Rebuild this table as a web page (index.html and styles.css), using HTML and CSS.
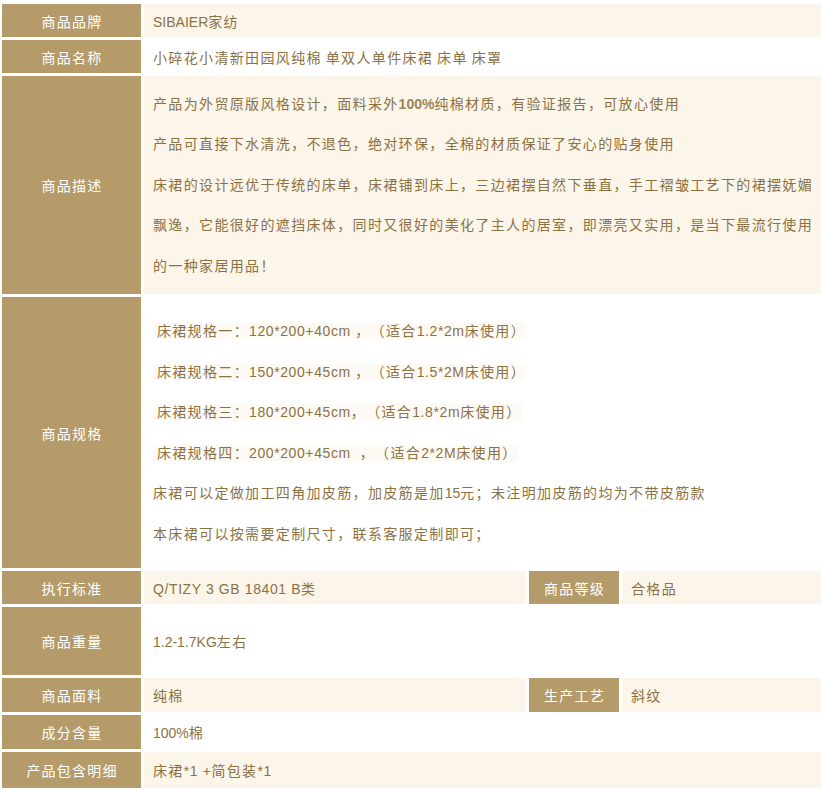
FILE: index.html
```html
<!DOCTYPE html>
<html lang="zh-CN">
<head>
<meta charset="utf-8">
<title>商品参数</title>
<link rel="stylesheet" href="styles.css">
</head>
<body>
<div class="spec">
  <div class="lb">商品品牌</div>
  <div class="val cream wide"><span class="in"><span class="en">SIBAIER</span>家纺</span></div>

  <div class="lb">商品名称</div>
  <div class="val white wide"><span class="in">小碎花小清新田园风纯棉<span class="en"> </span>单双人单件床裙<span class="en"> </span>床单<span class="en"> </span>床罩</span></div>

  <div class="lb">商品描述</div>
  <div class="val cream wide multi">
    <div class="txt">
      <p>产品为外贸原版风格设计，面料采外<b class="en">100%</b>纯棉材质，有验证报告，可放心使用</p>
      <p>产品可直接下水清洗，不退色，绝对环保，全棉的材质保证了安心的贴身使用</p>
      <p>床裙的设计远优于传统的床单，床裙铺到床上，三边裙摆自然下垂直，手工褶皱工艺下的裙摆妩媚飘逸，它能很好的遮挡床体，同时又很好的美化了主人的居室，即漂亮又实用，是当下最流行使用的一种家居用品！</p>
    </div>
  </div>

  <div class="lb">商品规格</div>
  <div class="val white wide multi">
    <div class="txt">
      <p><span class="hl"><span class="en">&nbsp;</span>床裙规格一：<span class="en sz">120*200+40cm </span>，（适合<span class="en sz">1.2*2m</span>床使用）</span></p>
      <p><span class="hl"><span class="en">&nbsp;</span>床裙规格二：<span class="en sz">150*200+45cm </span>，（适合<span class="en sz">1.5*2M</span>床使用）</span></p>
      <p><span class="hl"><span class="en">&nbsp;</span>床裙规格三：<span class="en sz">180*200+45cm</span>，（适合<span class="en sz">1.8*2m</span>床使用）</span></p>
      <p><span class="hl"><span class="en">&nbsp;</span>床裙规格四：<span class="en sz">200*200+45cm &nbsp;</span>，（适合<span class="en sz">2*2M</span>床使用）</span></p>
      <p>床裙可以定做加工四角加皮筋，加皮筋是加<span class="en">15</span>元；未注明加皮筋的均为不带皮筋款</p>
      <p>本床裙可以按需要定制尺寸，联系客服定制即可；</p>
    </div>
  </div>

  <div class="lb">执行标准</div>
  <div class="val cream"><span class="in"><span class="en sz">Q/TIZY 3 GB 18401 B</span>类</span></div>
  <div class="lb">商品等级</div>
  <div class="val cream"><span class="in">合格品</span></div>

  <div class="lb">商品重量</div>
  <div class="val white wide"><span class="in"><span class="en">1.2-1.7KG</span>左右</span></div>

  <div class="lb">商品面料</div>
  <div class="val cream"><span class="in">纯棉</span></div>
  <div class="lb">生产工艺</div>
  <div class="val cream"><span class="in">斜纹</span></div>

  <div class="lb">成分含量</div>
  <div class="val white wide"><span class="in"><span class="en">100%</span>棉</span></div>

  <div class="lb">产品包含明细</div>
  <div class="val cream wide"><span class="in">床裙<span class="en sz">*1 +</span>简包装<span class="en sz">*1</span></span></div>
</div>
</body>
</html>
```

FILE: styles.css
```css
html, body {
  margin: 0;
  padding: 0;
  background: #ffffff;
}

body {
  width: 821px;
  height: 790px;
  overflow: hidden;
  font-family: "Liberation Sans", "Noto Sans CJK SC", sans-serif;
  font-size: 14px;
  text-spacing-trim: space-all;
}

.spec {
  display: grid;
  grid-template-columns: 139px 382px 90px 199px;
  grid-template-rows: 33px 33px 218px 271px 33px 68px 34px 34px 36px;
  gap: 3px;
  padding: 4px 0 0 2px;
}

.lb {
  background: #b59b6a;
  color: #ffffff;
  letter-spacing: 1.2px;
  padding-left: 1px;
  display: flex;
  align-items: center;
  justify-content: center;
  white-space: nowrap;
}

.val {
  color: #8b7244;
  letter-spacing: 1.35px;
  display: flex;
  align-items: center;
  padding: 0 4px 0 9px;
  white-space: nowrap;
}

.in {
  white-space: pre;
}

.val.wide {
  grid-column: span 3;
}

.cream {
  background: #fcf5ea;
}

.white {
  background: #ffffff;
}

.multi {
  white-space: normal;
}

.txt {
  width: 100%;
  line-height: 40.5px;
}

.txt p {
  margin: 0;
}

.en {
  letter-spacing: 0;
}

.en.sz {
  letter-spacing: 0.6px;
}

b.en {
  font-weight: bold;
  color: #9c8458;
}

.hl {
  background: #fdfaf5;
}
```
